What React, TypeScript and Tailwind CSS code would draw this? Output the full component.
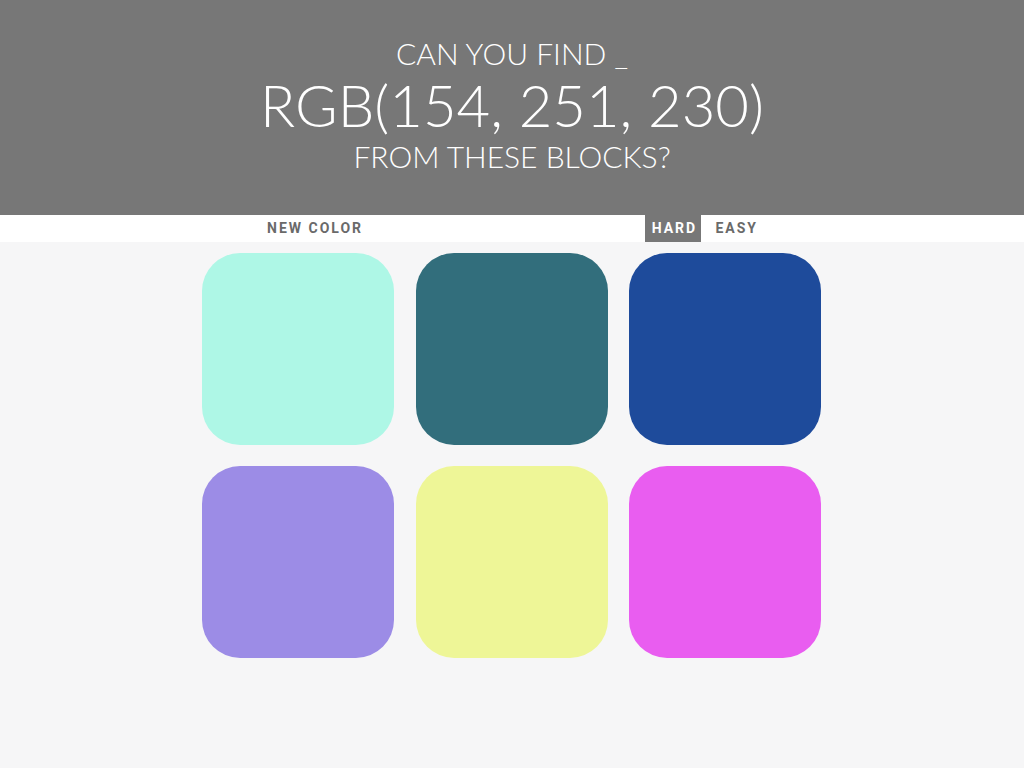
import React from "react";

const colors = [
  "rgb(174, 247, 230)",
  "rgb(50, 110, 124)",
  "rgb(30, 75, 155)",
  "rgb(156, 140, 230)",
  "rgb(238, 246, 151)",
  "rgb(233, 93, 240)",
];

export default function App() {
  return (
    <div className="min-h-[768px] bg-[#f6f6f7]">
      <header
        className="h-[215px] bg-[#777777] text-white text-center pt-[35px]"
        style={{ fontFamily: "Lato, 'Open Sans', sans-serif" }}
      >
        <div className="text-[30px] leading-[36px] font-light">CAN YOU FIND _</div>
        <div className="text-[58px] leading-[67px] font-light">RGB(154, 251, 230)</div>
        <div className="text-[30px] leading-[36px] font-light">FROM THESE BLOCKS?</div>
      </header>
      <nav
        className="h-[27px] bg-white flex text-[14px] font-bold tracking-[2px] text-[#6a6a6a]"
        style={{ fontFamily: "Roboto, 'Liberation Sans', sans-serif" }}
      >
        <div className="w-[202px]" />
        <div className="w-[619px] flex items-stretch">
          <button className="ml-[65px] h-full flex items-center">NEW COLOR</button>
          <div className="flex-1" />
          <button className="w-[56px] pl-[2px] h-full flex items-center justify-center bg-[#777777] text-white">HARD</button>
          <button className="ml-[14px] h-full flex items-center">EASY</button>
          <div className="w-[63px]" />
        </div>
      </nav>
      <main className="pl-[202px] pt-[11px]">
        <div className="grid grid-cols-[192px_192px_192px] gap-x-[21.5px] gap-y-[21px] w-[619px]">
          {colors.map((c, i) => (
            <div
              key={i}
              className="w-[192px] h-[192px] rounded-[38px]"
              style={{ backgroundColor: c }}
            />
          ))}
        </div>
      </main>
    </div>
  );
}
